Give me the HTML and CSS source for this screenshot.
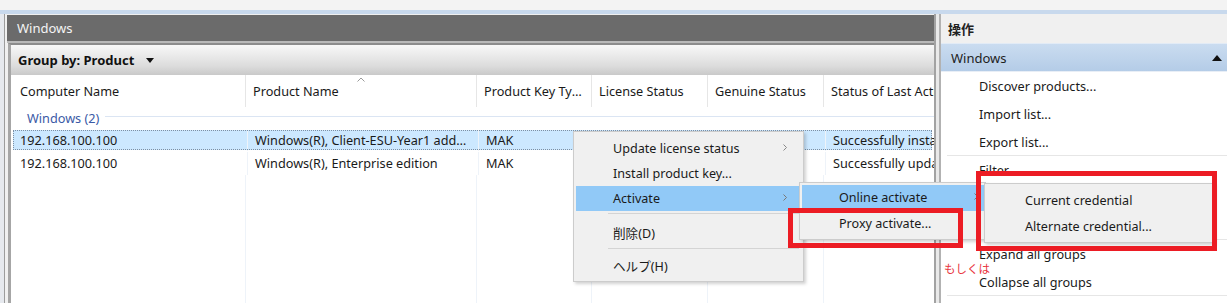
FILE: index.html
```html
<!DOCTYPE html>
<html lang="ja">
<head>
    <meta charset="UTF-8">
    <title>VAMT - Windows</title>
    <link rel="stylesheet" href="styles.css">
</head>
<body>
    <div class="app">
        <div class="top-strip"></div>

        <div class="panes">
            <div class="main">
                <div class="main-title">Windows</div>
                <div class="group-bar">
                    <span>Group by: Product</span>
                    <svg class="drop" width="8" height="5" viewBox="0 0 8 5"><path d="M0 0h8L4 5z" fill="#111"/></svg>
                </div>

                <div class="list">
                    <div class="row head">
                        <div class="cell">Computer Name</div>
                        <div class="cell sorted">Product Name
                            <svg class="sort" width="8" height="5" viewBox="0 0 8 5"><path d="M0.5 4.5L4 1l3.5 3.5" fill="none" stroke="#9a9a9a"/></svg>
                        </div>
                        <div class="cell"><span class="clip">Product Key Type</span></div>
                        <div class="cell">License Status</div>
                        <div class="cell">Genuine Status</div>
                        <div class="cell">Status of Last Action</div>
                    </div>

                    <div class="group-row">
                        <span>Windows (2)</span>
                        <div class="group-line"></div>
                    </div>

                    <div class="row item selected">
                        <div class="cell">192.168.100.100</div>
                        <div class="cell">Windows(R), Client-ESU-Year1 add-on for Enterprise</div>
                        <div class="cell">MAK</div>
                        <div class="cell"></div>
                        <div class="cell"></div>
                        <div class="cell">Successfully installed product key</div>
                    </div>
                    <div class="row item">
                        <div class="cell">192.168.100.100</div>
                        <div class="cell">Windows(R), Enterprise edition</div>
                        <div class="cell">MAK</div>
                        <div class="cell"></div>
                        <div class="cell"></div>
                        <div class="cell">Successfully updated license status</div>
                    </div>
                    <div class="row filler">
                        <div class="cell"></div>
                        <div class="cell"></div>
                        <div class="cell"></div>
                        <div class="cell"></div>
                        <div class="cell"></div>
                        <div class="cell"></div>
                    </div>
                </div>
            </div>

            <div class="splitter"></div>

            <div class="actions">
                <div class="actions-title">操作</div>
                <div class="actions-group">
                    <span>Windows</span>
                    <svg width="10" height="6" viewBox="0 0 10 6"><path d="M0 6h10L5 0z" fill="#111"/></svg>
                </div>
                <div class="action">Discover products...</div>
                <div class="action">Import list...</div>
                <div class="action sep">Export list...</div>
                <div class="action">Filter</div>
                <div class="action">Clear filter</div>
                <div class="action sep">Refresh product status</div>
                <div class="action">Expand all groups</div>
                <div class="action sep">Collapse all groups</div>
            </div>
        </div>

        <!-- right-click menu and its cascades -->
        <div class="menu context">
            <div class="menu-item">Update license status
                <svg class="arrow" width="4" height="7" viewBox="0 0 4 7"><path d="M0.5 0.5l3 3-3 3" fill="none" stroke="#888"/></svg>
            </div>
            <div class="menu-item">Install product key...</div>
            <div class="menu-item hot">Activate
                <svg class="arrow" width="4" height="7" viewBox="0 0 4 7"><path d="M0.5 0.5l3 3-3 3" fill="none" stroke="#777"/></svg>
            </div>
            <div class="menu-sep"></div>
            <div class="menu-item">削除(D)</div>
            <div class="menu-sep tight"></div>
            <div class="menu-item">ヘルプ(H)</div>
        </div>

        <div class="menu sub-activate">
            <div class="menu-item hot">Online activate
                <svg class="arrow" width="4" height="7" viewBox="0 0 4 7"><path d="M0.5 0.5l3 3-3 3" fill="none" stroke="#777"/></svg>
            </div>
            <div class="menu-item">Proxy activate...</div>
        </div>

        <div class="menu sub-online">
            <div class="menu-item">Current credential</div>
            <div class="menu-item">Alternate credential...</div>
        </div>

        <!-- annotation -->
        <div class="mark mark-proxy"></div>
        <div class="mark mark-online"></div>
        <div class="note">もしくは</div>
    </div>
</body>
</html>
```

FILE: styles.css
```css
* { margin: 0; padding: 0; box-sizing: border-box; }

body {
    font-family: "Noto Sans", "Noto Sans CJK JP", sans-serif;
    font-size: 12.7px;
    color: #1a1a1a;
    background: #f0f0f0;
    width: 1227px;
    height: 303px;
    overflow: hidden;
}

.app {
    position: relative;
    height: 303px;
    display: flex;
    flex-direction: column;
}

.top-strip {
    height: 14px;
    background: #f3f3f3;
    border-bottom: 4px solid #c8d9ed;
}

.panes {
    flex: 1;
    display: flex;
    min-height: 0;
}

/* ---------- main list pane ---------- */

.main {
    width: 934px;
    display: flex;
    flex-direction: column;
    background: #f0f0f0;
    border-left: 4px solid #e6e9ee;
    box-shadow: inset 1px 0 0 #9c9c9c;
    padding-left: 3px;
    overflow: hidden;
}

.main-title {
    height: 28px;
    margin-top: 1px;
    background: #6b6b6b;
    color: #f4f4f4;
    font-size: 13px;
    padding-left: 10px;
    display: flex;
    align-items: center;
    border-bottom: 2px solid #b9b9b9;
}

.group-bar {
    height: 32px;
    margin-left: 1px;
    border-top: 2px solid #8c8c8c;
    border-left: 3px solid #a6a6a6;
    background: linear-gradient(#f8f8f8, #dcdcdc 70%, #c9c9c9);
    font-weight: bold;
    font-size: 13px;
    color: #111;
    display: flex;
    align-items: center;
    gap: 12px;
    padding-left: 7px;
}

.list {
    flex: 1;
    margin-left: 1px;
    border-left: 3px solid #a6a6a6;
    background: #fff;
    display: flex;
    flex-direction: column;
    overflow: hidden;
}

.row {
    display: grid;
    grid-template-columns: 234px 231px 115px 116px 116px 200px;
    white-space: nowrap;
}

.cell {
    overflow: hidden;
    text-overflow: ellipsis;
    padding: 0 10px 0 7px;
    border-left: 1px solid #eef3f9;
}

.cell:first-child {
    border-left: none;
    padding-left: 9px;
}

.cell:last-child {
    text-overflow: clip;
    padding-right: 0;
}

.head {
    height: 32px;
}

.head .cell {
    border-left-color: #e6e6e6;
    display: flex;
    align-items: center;
    position: relative;
    padding-right: 9px;
}

.clip {
    overflow: hidden;
    text-overflow: ellipsis;
}

.sort {
    position: absolute;
    left: 111px;
    top: 2px;
}

.group-row {
    height: 21px;
    display: flex;
    align-items: center;
    gap: 6px;
    padding-left: 16px;
    color: #3b5aa6;
}

.group-line {
    flex: 1;
    height: 1px;
    background: #dbe5f3;
    margin-top: -2px;
}

.item {
    height: 23px;
    margin: 0 2px;
    align-items: center;
}

.item .cell {
    line-height: 23px;
}

.item .cell:first-child {
    padding-left: 7px;
}

.selected {
    background: #cce8ff;
    outline: 1px dotted #7d8fa3;
    outline-offset: -1px;
    height: 20px;
    margin-top: 2px;
    margin-bottom: 2px;
}

.selected .cell {
    line-height: 21px;
}

.filler {
    flex: 1;
}

/* ---------- actions pane ---------- */

.splitter {
    width: 7px;
    border-left: 2px solid #a2a2a2;
    border-right: 2px solid #b2b2b2;
    background: #e9e9e9;
}

.actions {
    flex: 1;
    background: #fff;
    display: flex;
    flex-direction: column;
}

.actions-title {
    height: 29px;
    background: #f0f0f0;
    font-size: 13px;
    font-weight: bold;
    color: #222;
    padding: 5px 0 0 7px;
}

.actions-group {
    height: 29px;
    background: linear-gradient(#cadcf0, #b4cce7);
    border-top: 1px solid #e2ebf6;
    border-bottom: 1px solid #e8eef6;
    font-size: 13px;
    color: #1e1e1e;
    display: flex;
    align-items: center;
    justify-content: space-between;
    padding: 0 5px 0 10px;
}

.action {
    height: 28px;
    line-height: 28px;
    padding-left: 32px;
    margin-left: 6px;
}

.action.sep {
    border-bottom: 1px solid #e6e6e6;
}

/* ---------- context menus ---------- */

.menu {
    position: absolute;
    background: #f0f0f0;
    border: 1px solid #cccccc;
    box-shadow: 2px 2px 3px rgba(0, 0, 0, 0.18);
    padding: 2px;
}

.menu-item {
    position: relative;
    height: 25px;
    line-height: 25px;
    padding-left: 37px;
    font-size: 12.6px;
    color: #1a1a1a;
}

.menu-item.hot {
    background: #91c9f7;
}

.arrow {
    position: absolute;
    right: 14px;
    top: 8px;
}

.menu-sep {
    height: 1px;
    background: #d4d4d4;
    margin: 2px 2px 7px 32px;
}

.menu-sep.tight {
    margin: 1px 2px 5px 32px;
}

.context {
    left: 573px;
    top: 131px;
    width: 231px;
    padding: 4px 2px 1px 2px;
}

.context .menu-item:nth-child(5),
.context .menu-item:nth-child(7) {
    height: 26px;
    line-height: 26px;
}

.sub-activate {
    left: 799px;
    top: 182px;
    width: 187px;
    padding: 2px 1px 2px 2px;
}

.sub-activate .menu-item {
    height: 26px;
    line-height: 26px;
}

.sub-activate .arrow {
    right: 6px;
}

.sub-online {
    left: 984px;
    top: 183px;
    width: 230px;
    padding: 4px 2px 2px 2px;
}

.sub-online .menu-item {
    height: 26px;
    line-height: 26px;
    padding-left: 38px;
}

/* ---------- annotation ---------- */

.mark {
    position: absolute;
    border: 5px solid #ec1c24;
}

.mark-proxy {
    left: 788px;
    top: 208px;
    width: 175px;
    height: 40px;
}

.mark-online {
    left: 976px;
    top: 171px;
    width: 241px;
    height: 80px;
}

.note {
    position: absolute;
    left: 942px;
    top: 259px;
    padding: 0 2px;
    background: #fff;
    color: #e8333c;
    font-size: 11.5px;
    line-height: 19px;
}
```
